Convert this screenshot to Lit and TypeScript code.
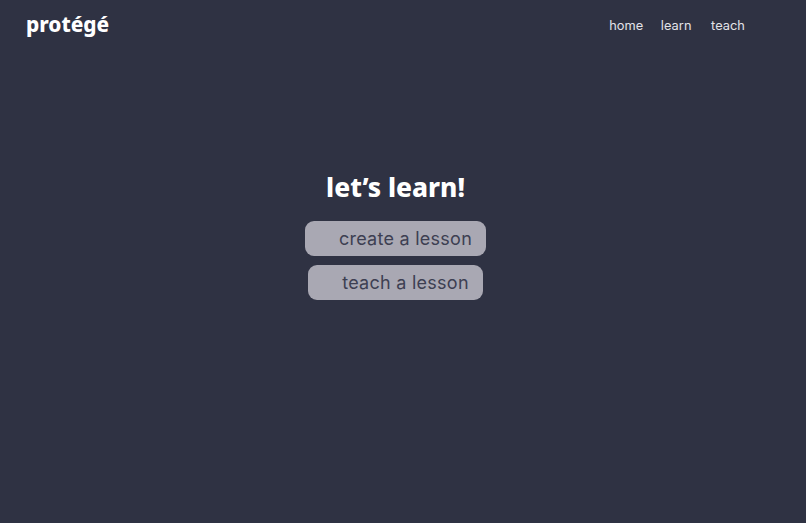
import { LitElement, html, css } from "lit";
import { customElement } from "lit/decorators.js";

@customElement("app-root")
export class AppRoot extends LitElement {
  static styles = css`
    :host {
      display: block;
      width: 806px;
      height: 523px;
      background: #2f3243;
      overflow: hidden;
    }
    .top {
      display: flex;
      align-items: center;
      justify-content: space-between;
      height: 52px;
      padding: 0 61px 0 26px;
    }
    .logo {
      margin-bottom: 4px;
      font: 800 20.8px/1 "Noto Sans", sans-serif;
      color: #fff;
    }
    nav {
      display: flex;
      font: 400 12.8px/1 Inter, sans-serif;
      letter-spacing: 0.05px;
      color: #e2e2e8;
    }
    nav span:nth-child(1) {
      margin-right: 17.5px;
    }
    nav span:nth-child(2) {
      margin-right: 19.5px;
    }
    main {
      display: flex;
      flex-direction: column;
      align-items: center;
      padding: 119px 15px 0 0;
    }
    h1 {
      margin: 0 0 18px;
      font: 800 26.3px/32px "Noto Sans", sans-serif;
      color: #fff;
    }
    .btn {
      box-sizing: border-box;
      display: flex;
      align-items: center;
      height: 35px;
      border-radius: 9px;
      background: #a9a8b3;
      color: #3d3f52;
      font: 400 18px/1 Inter, sans-serif;
      letter-spacing: 0.26px;
      padding: 0 14px 0 34px;
      margin-bottom: 9px;
      white-space: nowrap;
    }
  `;

  render() {
    return html`
      <header class="top">
        <div class="logo">protégé</div>
        <nav><span>home</span><span>learn</span><span>teach</span></nav>
      </header>
      <main>
        <h1>let’s learn!</h1>
        <div class="btn">create a lesson</div>
        <div class="btn">teach a lesson</div>
      </main>
    `;
  }
}
